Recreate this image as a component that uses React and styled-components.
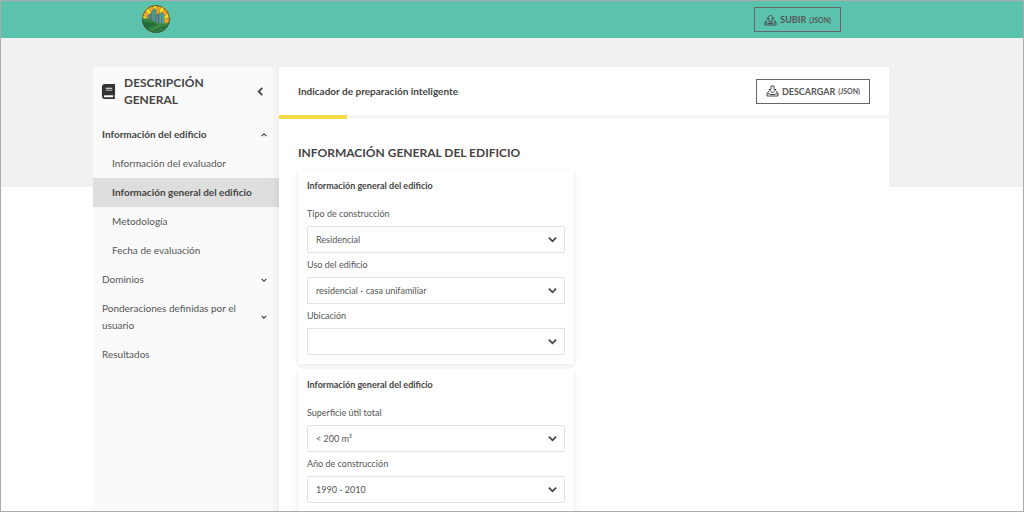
import React, { useState } from 'react'
import styled, { createGlobalStyle } from 'styled-components'
import { FaBook } from 'react-icons/fa'

const GlobalStyle = createGlobalStyle`
    * {
        box-sizing: border-box;
    }
    body {
        margin: 0;
        background: #fff;
        color: #555;
        font-family: Lato, "Liberation Sans", sans-serif;
        font-size: 10px;
    }
    button, select {
        font-family: inherit;
        color: inherit;
    }
`

const Page = styled.div`
    display: flex;
    flex-direction: column;
    height: 100vh;
    overflow: hidden;
    border: 1px solid #ababab;
`

const TopBar = styled.header`
    flex: none;
    padding-right: 42px;
    background: #5bc2ae;
`

const TopBarInner = styled.div`
    display: flex;
    justify-content: space-between;
    align-items: center;
    max-width: 700px;
    height: 37px;
    margin: 0 auto;
`

const Body = styled.div`
    display: flex;
    flex: 1;
    min-height: 0;
    padding: 29px 42px 0 0;
    background: linear-gradient(#f1f1f1 149px, #fff 149px);
`

const Container = styled.div`
    display: flex;
    flex: 1;
    max-width: 796px;
    margin: 0 auto;
`

const Sidebar = styled.aside`
    flex: none;
    width: 186px;
    background: #fafafa;
    box-shadow: inset -8px 0 8px -6px rgba(0, 0, 0, 0.07);
`

const SidebarHead = styled.div`
    display: flex;
    align-items: center;
    padding: 7px 14px 12px 8px;
`

const SidebarTitle = styled.h1`
    flex: 1;
    margin: 0 0 0 8px;
    color: #444;
    font-size: 12px;
    font-weight: 700;
    line-height: 17px;
    text-transform: uppercase;
`

const IconButton = styled.button`
    display: flex;
    padding: 0;
    background: none;
    border: none;
    cursor: pointer;
`

const NavList = styled.ul`
    margin: 0;
    padding: 0;
    list-style: none;
`

const NavItem = styled.button`
    display: flex;
    justify-content: space-between;
    align-items: center;
    width: 100%;
    padding: 6px 12px 6px ${({ $sub }) => ($sub ? '19px' : '9px')};
    background: ${({ $active }) => ($active ? 'rgba(0, 0, 0, 0.11)' : 'none')};
    border: none;
    color: ${({ $bold }) => ($bold ? '#444' : '#555')};
    font-size: 10px;
    font-weight: ${({ $bold }) => ($bold ? 700 : 400)};
    line-height: 17px;
    text-align: left;
    cursor: pointer;
`

const Main = styled.main`
    flex: 1;
    background: #fff;
`

const MainHead = styled.div`
    display: flex;
    justify-content: space-between;
    align-items: center;
    height: 48px;
    padding: 0 19px;
`

const MainTitle = styled.p`
    margin: 0;
    color: #444;
    font-size: 10px;
    font-weight: 700;
`

const Progress = styled.div`
    height: 3px;
    background: #f5f5f5;
`

const ProgressBar = styled.div`
    height: 4px;
    background: #f3da47;
`

const OutlineButton = styled.button`
    display: flex;
    align-items: center;
    gap: 3px;
    height: 25px;
    padding: 0 9px;
    background: none;
    border: 1px solid #666;
    font-size: 9px;
    font-weight: 700;
    cursor: pointer;
`

const Format = styled.span`
    font-size: 7px;
`

const Content = styled.div`
    padding: 25px 19px;
`

const SectionTitle = styled.h2`
    margin: 0 0 7px;
    color: #444;
    font-size: 12px;
    font-weight: 700;
    line-height: 20px;
    text-transform: uppercase;
`

const Card = styled.section`
    max-width: 276px;
    margin-bottom: 5px;
    padding: 9px;
    background: #fff;
    box-shadow: 0 1px 5px rgba(0, 0, 0, 0.1);
`

const CardTitle = styled.h3`
    margin: 0 0 14px;
    color: #444;
    font-size: 9px;
    font-weight: 700;
    line-height: 14px;
`

const Field = styled.div`
    & + & {
        margin-top: 5px;
    }
    label {
        display: block;
        margin-bottom: 5px;
        font-size: 9px;
        line-height: 14px;
    }
`

const SelectBox = styled.div`
    position: relative;
    svg {
        position: absolute;
        top: 9px;
        right: 8px;
        pointer-events: none;
    }
`

const Select = styled.select`
    display: block;
    width: 100%;
    height: 27px;
    padding: 0 24px 0 8px;
    appearance: none;
    background: #fff;
    border: 1px solid #e2e2e2;
    border-radius: 1px;
    font-size: 9px;
`

const Chevron = ({ size = 9, width = 2, rotate = 0 }) => (
    <svg width={size} height={size} viewBox="0 0 10 10" fill="none" stroke="#444" strokeWidth={width} aria-hidden="true">
        <path d="M1 3 L5 7 L9 3" transform={`rotate(${rotate} 5 5)`} />
    </svg>
)

const TrayIcon = ({ down }) => (
    <svg width="13" height="12" viewBox="0 0 26 24" fill="none" stroke="#4a4a4a" strokeWidth="2" strokeLinejoin="round" aria-hidden="true">
        <path d="M6 12 L2 17 V22 H24 V17 L20 12" />
        <path d="M2 17.5 H7 L8 19 H18 L19 17.5 H24" />
        {down
            ? <path d="M10 2 H16 V9 H20 L13 16 L6 9 H10 Z" />
            : <path d="M10 16 H16 V9 H20 L13 2 L6 9 H10 Z" />}
    </svg>
)

const Logo = () => (
    <svg width="30" height="30" viewBox="0 0 60 60" role="img" aria-label="Logo">
        <clipPath id="disc"><circle cx="30" cy="28" r="28" /></clipPath>
        <g clipPath="url(#disc)">
            <rect width="60" height="60" fill="#f5a32b" />
            <g fill="#f9dc25" stroke="#6b5a24" strokeWidth="0.8">
                <path d="M30 34 L0 28 L0 18 Z" />
                <path d="M30 34 L5 8 L13 1 Z" />
                <path d="M30 34 L23 0 L32 0 Z" />
                <path d="M30 34 L41 0 L50 4 Z" />
                <path d="M30 34 L58 14 L60 24 Z" />
            </g>
            <g stroke="#315e60" strokeWidth="1">
                <path d="M14 44 V21 L21 16 V44 Z" fill="#668c9c" />
                <path d="M22 44 V12 L27 7 L30 10 V44 Z" fill="#59a99b" />
                <path d="M30 44 V21 L36 18 V44 Z" fill="#6a8796" />
                <path d="M36 44 V17 L41 15 L46 19 V44 Z" fill="#59a99b" />
                <path d="M41 16 V44 M26 9 V44 M18 19 V44" fill="none" />
            </g>
            <path d="M0 27 Q18 25 31 36 Q44 40 60 33 V60 H0 Z" fill="#348442" />
            <path d="M0 35 Q17 31 34 40 Q21 43 10 51 L0 60 Z" fill="#216b37" />
            <path d="M10 50 Q27 37 60 37 M17 54 Q33 41 59 41" fill="none" stroke="#4f9f45" strokeWidth="1" />
            <path d="M22 56 Q36 43 59 43 M36 56 Q45 49 55 48" fill="none" stroke="#174f34" strokeWidth="1.5" />
        </g>
        <circle cx="30" cy="28" r="27" fill="none" stroke="#365f4b" strokeWidth="2" />
    </svg>
)

const buildingPages = [
    'Información del evaluador',
    'Información general del edificio',
    'Metodología',
    'Fecha de evaluación',
]

const cards = [
    {
        id: 'uso',
        fields: [
            { id: 'tipo', label: 'Tipo de construcción', value: 'Residencial' },
            { id: 'usoEdificio', label: 'Uso del edificio', value: 'residencial - casa unifamiliar' },
            { id: 'ubicacion', label: 'Ubicación', value: '' },
        ],
    },
    {
        id: 'superficie',
        fields: [
            { id: 'superficieUtil', label: 'Superficie útil total', value: '< 200 m²' },
            { id: 'anio', label: 'Año de construcción', value: '1990 - 2010' },
        ],
    },
]

const App = () => {
    const [page, setPage] = useState(buildingPages[1])
    const [open, setOpen] = useState(true)

    return (
        <>
            <GlobalStyle />
            <Page>
                <TopBar>
                    <TopBarInner>
                        <Logo />
                        <OutlineButton><TrayIcon />SUBIR <Format>(JSON)</Format></OutlineButton>
                    </TopBarInner>
                </TopBar>
                <Body>
                    <Container>
                        <Sidebar>
                            <SidebarHead>
                                <FaBook size={15} color="#333" />
                                <SidebarTitle>Descripción general</SidebarTitle>
                                <IconButton aria-label="Contraer menú">
                                    <Chevron rotate={90} />
                                </IconButton>
                            </SidebarHead>
                            <nav>
                                <NavList>
                                    <li>
                                        <NavItem $bold aria-expanded={open} onClick={() => setOpen(!open)}>
                                            Información del edificio
                                            <Chevron size={6} rotate={open ? 180 : 0} />
                                        </NavItem>
                                        {open && (
                                            <NavList>
                                                {buildingPages.map((name) => (
                                                    <li key={name}>
                                                        <NavItem $sub $active={name === page} $bold={name === page} onClick={() => setPage(name)}>
                                                            {name}
                                                        </NavItem>
                                                    </li>
                                                ))}
                                            </NavList>
                                        )}
                                    </li>
                                    <li><NavItem>Dominios<Chevron size={6} /></NavItem></li>
                                    <li><NavItem>Ponderaciones definidas por el usuario<Chevron size={6} /></NavItem></li>
                                    <li><NavItem>Resultados</NavItem></li>
                                </NavList>
                            </nav>
                        </Sidebar>
                        <Main>
                            <MainHead>
                                <MainTitle>Indicador de preparación inteligente</MainTitle>
                                <OutlineButton><TrayIcon down />DESCARGAR <Format>(JSON)</Format></OutlineButton>
                            </MainHead>
                            <Progress>
                                <ProgressBar style={{ width: `${(1 / 9) * 100}%` }} />
                            </Progress>
                            <Content>
                                <SectionTitle>Información general del edificio</SectionTitle>
                                {cards.map((card) => (
                                    <Card key={card.id}>
                                        <CardTitle>Información general del edificio</CardTitle>
                                        {card.fields.map((field) => (
                                            <Field key={field.id}>
                                                <label htmlFor={field.id}>{field.label}</label>
                                                <SelectBox>
                                                    <Select id={field.id} defaultValue={field.value}>
                                                        <option value={field.value}>{field.value}</option>
                                                    </Select>
                                                    <Chevron />
                                                </SelectBox>
                                            </Field>
                                        ))}
                                    </Card>
                                ))}
                            </Content>
                        </Main>
                    </Container>
                </Body>
            </Page>
        </>
    )
}

export default App
